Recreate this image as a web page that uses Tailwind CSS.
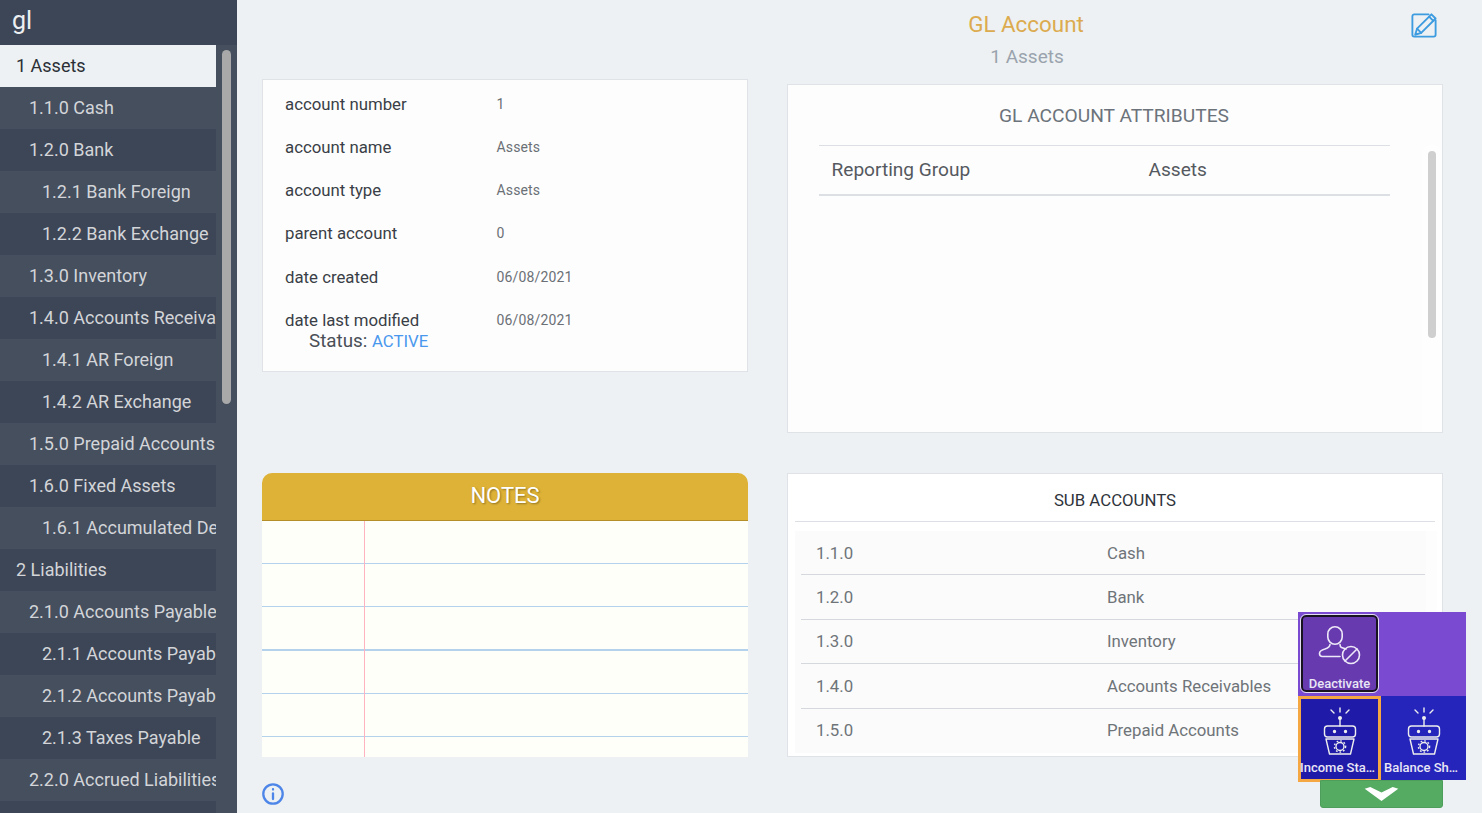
<!DOCTYPE html>
<html lang="en">
<head>
    <meta charset="UTF-8">
    <title>GL Account</title>
    <script src="https://cdn.jsdelivr.net/npm/@tailwindcss/browser@4"></script>
</head>
<body class="bg-[#edf1f3] font-['Roboto',sans-serif] overflow-hidden">
<div class="relative flex h-[813px] w-[1482px] overflow-hidden">

    <!-- sidebar -->
    <aside class="relative w-[237px] shrink-0 bg-[#454f5e] overflow-hidden">
        <div class="h-[45px] bg-[#3d4656] pl-[12px] text-[25px] leading-[42px] text-[#eceff1]">gl</div>
        <ul class="w-[216px] text-[18px] leading-[42px] text-[#d3d5d9] whitespace-nowrap">
            <li class="h-[42px] overflow-hidden bg-[#edf1f3] pl-[16px] text-[#2b2f36]">1 Assets</li>
            <li class="h-[42px] overflow-hidden bg-[#454f5e] pl-[29px]">1.1.0 Cash</li>
            <li class="h-[42px] overflow-hidden bg-[#3d4656] pl-[29px]">1.2.0 Bank</li>
            <li class="h-[42px] overflow-hidden bg-[#454f5e] pl-[42px]">1.2.1 Bank Foreign</li>
            <li class="h-[42px] overflow-hidden bg-[#3d4656] pl-[42px]">1.2.2 Bank Exchange</li>
            <li class="h-[42px] overflow-hidden bg-[#454f5e] pl-[29px]">1.3.0 Inventory</li>
            <li class="h-[42px] overflow-hidden bg-[#3d4656] pl-[29px]">1.4.0 Accounts Receivables</li>
            <li class="h-[42px] overflow-hidden bg-[#454f5e] pl-[42px]">1.4.1 AR Foreign</li>
            <li class="h-[42px] overflow-hidden bg-[#3d4656] pl-[42px]">1.4.2 AR Exchange</li>
            <li class="h-[42px] overflow-hidden bg-[#454f5e] pl-[29px]">1.5.0 Prepaid Accounts</li>
            <li class="h-[42px] overflow-hidden bg-[#3d4656] pl-[29px]">1.6.0 Fixed Assets</li>
            <li class="h-[42px] overflow-hidden bg-[#454f5e] pl-[42px]">1.6.1 Accumulated Depreciation</li>
            <li class="h-[42px] overflow-hidden bg-[#3d4656] pl-[16px]">2 Liabilities</li>
            <li class="h-[42px] overflow-hidden bg-[#454f5e] pl-[29px]">2.1.0 Accounts Payable</li>
            <li class="h-[42px] overflow-hidden bg-[#3d4656] pl-[42px]">2.1.1 Accounts Payable</li>
            <li class="h-[42px] overflow-hidden bg-[#454f5e] pl-[42px]">2.1.2 Accounts Payable</li>
            <li class="h-[42px] overflow-hidden bg-[#3d4656] pl-[42px]">2.1.3 Taxes Payable</li>
            <li class="h-[42px] overflow-hidden bg-[#454f5e] pl-[29px]">2.2.0 Accrued Liabilities</li>
            <li class="h-[42px] overflow-hidden bg-[#3d4656] pl-[29px]"></li>
        </ul>
        <div class="absolute left-[222px] top-[50px] h-[354px] w-[9px] rounded-full bg-[#a9a9a9]"></div>
    </aside>

    <!-- main -->
    <main class="w-[1245px] shrink-0">
        <header class="relative h-[79px] pl-[333px] text-center">
            <h1 class="pt-[10px] text-[22.4px] leading-[28px] text-[#dcab4f]">GL Account</h1>
            <h2 class="mt-[7px] pl-[2px] text-[19px] leading-[24px] text-[#9aa3ad]">1 Assets</h2>
            <svg class="absolute left-[1174px] top-[12px] h-[26px] w-[26px]" viewBox="0 0 28 28" fill="none" stroke="#3d9be0" stroke-width="2" stroke-linejoin="round" stroke-linecap="round">
                <path d="M19 2.500H3.500a2 2 0 0 0-2 2v20a2 2 0 0 0 2 2h21a2 2 0 0 0 2-2V9"/>
                <path d="M22 2.500l4.500 4.500L11 22.500l-6.500 2 2-6.500z"/>
                <path d="M19.500 5l4.500 4.500"/>
                <path d="M6.500 18l4.500 4.500"/>
            </svg>
        </header>

        <div class="flex pl-[25px]">
            <!-- left column -->
            <div class="w-[486px] shrink-0">
                <section class="h-[293px] border border-[#dfe3e8] bg-[#fdfdfd] pl-[22px] pt-[3px]">
                    <dl class="text-[16.8px] text-[#3a3f47]">
                        <div class="flex h-[43px] items-center"><dt class="w-[211.5px]">account number</dt><dd class="text-[14px] tracking-[0.15px] text-[#6b7076]">1</dd></div>
                        <div class="flex h-[43px] items-center"><dt class="w-[211.5px]">account name</dt><dd class="text-[14px] tracking-[0.15px] text-[#6b7076]">Assets</dd></div>
                        <div class="flex h-[43px] items-center"><dt class="w-[211.5px]">account type</dt><dd class="text-[14px] tracking-[0.15px] text-[#6b7076]">Assets</dd></div>
                        <div class="flex h-[43px] items-center"><dt class="w-[211.5px]">parent account</dt><dd class="text-[14px] tracking-[0.15px] text-[#6b7076]">0</dd></div>
                        <div class="flex h-[44px] items-center pt-[1px]"><dt class="w-[211.5px]">date created</dt><dd class="text-[14px] tracking-[0.15px] text-[#6b7076]">06/08/2021</dd></div>
                        <div class="flex h-[43px] items-center"><dt class="w-[211.5px]">date last modified</dt><dd class="text-[14px] tracking-[0.15px] text-[#6b7076]">06/08/2021</dd></div>
                    </dl>
                    <p class="-mt-[12px] pl-[24px] text-[18.8px] leading-[22px] text-[#4a4f57]">Status: <span class="text-[16.8px] text-[#4a98ee]">ACTIVE</span></p>
                </section>

                <section class="mt-[101px] h-[284px] overflow-hidden">
                    <div class="h-[48px] rounded-t-[10px] border-b border-[#b48e28] bg-[#deb236] text-center text-[22px] leading-[46px] text-white [text-shadow:1px_1px_2px_rgba(0,0,0,0.35)]">NOTES</div>
                    <div class="relative h-[236px] bg-[#fffffa]">
                        <div class="h-[43px] border-b border-[#b4d2ec]"></div>
                        <div class="h-[43px] border-b border-[#b4d2ec]"></div>
                        <div class="h-[44px] border-b-2 border-[#b4d2ec]"></div>
                        <div class="h-[43px] border-b border-[#b4d2ec]"></div>
                        <div class="h-[43px] border-b border-[#b4d2ec]"></div>
                        <div class="absolute left-[102px] top-0 h-full w-px bg-[#ffb3c1]"></div>
                    </div>
                </section>

                <svg class="mt-[26px] h-[22px] w-[22px]" viewBox="0 0 22 22" fill="none" stroke="#4d86e8" stroke-width="2.300" stroke-linecap="round">
                    <circle cx="11" cy="11" r="9.700"/>
                    <path d="M11 10.500v5.500"/>
                    <path d="M11 6.200v.4"/>
                </svg>
            </div>

            <!-- right column -->
            <div class="ml-[39px] mt-[5px] w-[656px] shrink-0">
                <section class="relative h-[349px] border border-[#dfe3e8] bg-[#fdfdfd]">
                    <h3 class="pr-[2px] pt-[18px] text-center text-[19.2px] leading-[26px] text-[#6c737b]">GL ACCOUNT ATTRIBUTES</h3>
                    <div class="mx-[31px] mt-[16px] flex h-[51px] w-[571px] items-center border-y border-y-[#dcdfe3] border-b-2 pl-[12.500px] pt-[1px] text-[19.100px] text-[#55595f]">
                        <span class="w-[317px]">Reporting Group</span><span>Assets</span>
                    </div>
                    <div class="absolute bottom-0 left-[634px] top-[60px] w-[20px] rounded-t-[8px] bg-[#fefefe]"></div>
                    <div class="absolute left-[640px] top-[66px] h-[187px] w-[8px] rounded-full bg-[#cfcfcf]"></div>
                </section>

                <section class="mt-[40px] h-[284px] overflow-hidden border border-[#dfe3e8] bg-white px-[7px]">
                    <h3 class="h-[48px] border-b border-[#dcdfe3] text-center text-[16.800px] leading-[52.500px] text-[#2f343b]">SUB ACCOUNTS</h3>
                    <div class="-mr-[2px] mt-[9px] bg-[#fdfdfd]">
                        <ul class="w-[631px] bg-[#fbfbfb] pl-[6px] pr-[1px] text-[16.800px] text-[#6f7479]">
                            <li class="flex h-[44px] items-center border-b border-[#d5d8dc] pl-[15px] pt-[2px]"><span class="w-[291px]">1.1.0</span><span>Cash</span></li>
                            <li class="flex h-[45px] items-center border-b border-[#d5d8dc] pl-[15px] pt-[1px]"><span class="w-[291px]">1.2.0</span><span>Bank</span></li>
                            <li class="flex h-[44px] items-center border-b border-[#d5d8dc] pl-[15px]"><span class="w-[291px]">1.3.0</span><span>Inventory</span></li>
                            <li class="flex h-[45px] items-center border-b border-[#d5d8dc] pl-[15px] pt-[1px]"><span class="w-[291px]">1.4.0</span><span>Accounts Receivables</span></li>
                            <li class="flex h-[44px] items-center pl-[15px]"><span class="w-[291px]">1.5.0</span><span>Prepaid Accounts</span></li>
                        </ul>
                    </div>
                </section>
            </div>
        </div>
    </main>

    <!-- action menu over content -->
    <div class="absolute left-[1298px] top-[612px] w-[168px] text-[13px] font-medium text-[#e9e6f5]">
        <div class="flex h-[84px] bg-[#7a4bd0]">
            <button class="ml-[3px] mt-[3px] flex h-[77px] w-[77px] flex-col items-center rounded-[5px] border-2 border-[#17141f] bg-[#673ab0] outline outline-1 outline-[#e4dcf3]">
                <svg class="mt-[7px] h-[42px] w-[48px] shrink-0" viewBox="0 0 48 42" fill="none" stroke="#eee9f8" stroke-width="1.600" stroke-linecap="round">
                    <rect x="11.800" y="2.800" width="14.400" height="17.400" rx="7.200"/>
                    <path d="M14 20.500c0 2.500-2 3.500-5 4.500-3 .8-5.500 2-5.500 4.500 0 2 1 3 3 3H24"/>
                    <path d="M24 20.500c0 1.500.5 2.500 1.500 3 1.500.5 3 1 4.500 1.500"/>
                    <circle cx="35" cy="31" r="8.500"/>
                    <path d="M29 37l12-12"/>
                </svg>
                <span class="mt-[11px] whitespace-nowrap leading-[14px]">Deactivate</span>
            </button>
        </div>
        <div class="flex h-[84px] bg-[#2525bb]">
            <button class="flex h-[86px] w-[83px] shrink-0 flex-col items-center border-[3px] border-[#f5a742] bg-[#1f1ba8]">
                <svg class="mt-[8px] h-[50px] w-[34px] shrink-0" viewBox="0 0 34 50" fill="none" stroke="#eee" stroke-width="1.400" stroke-linecap="round" stroke-linejoin="round">
                    <path d="M17 1v4M8 3l3 3M26 3l-3 3"/>
                    <circle cx="17" cy="11" r="1.300" fill="#eee"/>
                    <path d="M17 12v7"/>
                    <rect x="1.500" y="19" width="31" height="11" rx="3"/>
                    <circle cx="11.500" cy="24.500" r="1" fill="#eee"/>
                    <circle cx="22.500" cy="24.500" r="1" fill="#eee"/>
                    <path d="M3 32h28l-3.500 15h-21z"/>
                    <circle cx="17" cy="39.500" r="4"/>
                    <circle cx="17" cy="39.500" r="5.600" stroke-width="1.400" stroke-dasharray="1.700 2" stroke-linecap="butt"/>
                </svg>
                <span class="mt-[4px] w-[79px] overflow-hidden text-ellipsis whitespace-nowrap leading-[14px]">Income Statement</span>
            </button>
            <button class="flex h-[84px] w-[85px] flex-col items-center">
                <svg class="mt-[11px] h-[50px] w-[34px] shrink-0" viewBox="0 0 34 50" fill="none" stroke="#eee" stroke-width="1.400" stroke-linecap="round" stroke-linejoin="round">
                    <path d="M17 1v4M8 3l3 3M26 3l-3 3"/>
                    <circle cx="17" cy="11" r="1.300" fill="#eee"/>
                    <path d="M17 12v7"/>
                    <rect x="1.500" y="19" width="31" height="11" rx="3"/>
                    <circle cx="11.500" cy="24.500" r="1" fill="#eee"/>
                    <circle cx="22.500" cy="24.500" r="1" fill="#eee"/>
                    <path d="M3 32h28l-3.500 15h-21z"/>
                    <circle cx="17" cy="39.500" r="4"/>
                    <circle cx="17" cy="39.500" r="5.600" stroke-width="1.400" stroke-dasharray="1.700 2" stroke-linecap="butt"/>
                </svg>
                <span class="mr-[3px] mt-[4px] w-[76px] overflow-hidden text-ellipsis whitespace-nowrap leading-[14px]">Balance Sheet</span>
            </button>
        </div>
    </div>
    <button class="absolute left-[1320px] top-[780px] flex h-[28px] w-[123px] justify-center rounded-b-[3px] border border-[#4d9e5a] bg-[#56ab63]">
        <svg class="mt-[6px] h-[14px] w-[35px]" viewBox="0 0 36 15" fill="#fff"><path d="M0 2l6-2 12 6 12-6 6 2-18 13z"/></svg>
    </button>
</div>
</body>
</html>
